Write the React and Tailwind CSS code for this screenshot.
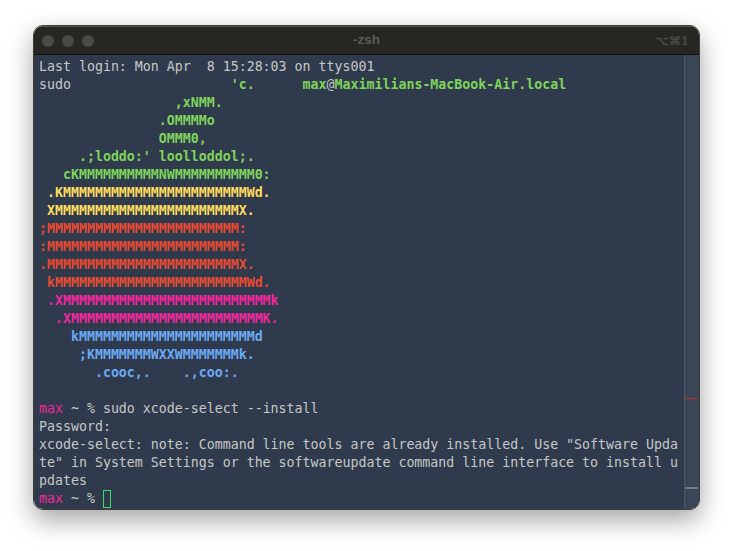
const G = "text-[#7fd45b] font-bold";
const Y = "text-[#ffdc5e] font-bold";
const R = "text-[#ea4a30] font-bold";
const P = "text-[#f5279f] font-bold";
const B = "text-[#6caaf5] font-bold";
const M = (n) => "M".repeat(n);

const logo = [
  [G, "                 ,xNMM."],
  [G, "               .OMMMMo"],
  [G, "               OMMM0,"],
  [G, "     .;loddo:' loolloddol;."],
  [G, "   cK" + M(10) + "NW" + M(10) + "0:"],
  [Y, " .K" + M(23) + "Wd."],
  [Y, " X" + M(23) + "X."],
  [R, ";" + M(24) + ":"],
  [R, ":" + M(24) + ":"],
  [R, "." + M(24) + "X."],
  [R, " k" + M(24) + "Wd."],
  [P, " .X" + M(26) + "k"],
  [P, "  .X" + M(24) + "K."],
  [B, "    k" + M(22) + "d"],
  [B, "     ;K" + M(7) + "WXXW" + M(7) + "k."],
  [B, "       .cooc,.    .,coo:."],
];

function Line({ children, className = "" }) {
  return <div className={"h-[18px] leading-[18px] whitespace-pre " + className}>{children}</div>;
}

export default function App() {
  return (
    <div className="w-[733px] h-[551px] bg-white pt-[25px] pl-[33px] overflow-hidden font-['DejaVu_Sans_Mono',monospace] text-[13.28px] text-[#c6c9c7]">
      <div className="w-[667px] h-[485px] rounded-[10px] overflow-hidden flex flex-col border border-[#3c3c3a] shadow-[0_10px_26px_rgba(0,0,0,0.36)]">
        <div className="relative h-[29px] shrink-0 bg-[#272622] border-t border-[#55544f] border-b border-b-[#111] flex items-center justify-between pl-[8px] pr-[11px]">
          <div className="flex gap-[8px]">
            <span className="w-[12px] h-[12px] rounded-full bg-[#4b4a46]" />
            <span className="w-[12px] h-[12px] rounded-full bg-[#4b4a46]" />
            <span className="w-[12px] h-[12px] rounded-full bg-[#4b4a46]" />
          </div>
          <span className="absolute inset-x-0 text-center font-['Liberation_Sans',sans-serif] font-bold text-[13.5px] text-[#5c5b55]">-zsh</span>
          <span className="font-['Liberation_Sans',sans-serif] font-bold text-[12px] text-[#4c4b46]">⌥⌘1</span>
        </div>
        <div className="flex-1 flex bg-[#2f3a4d] min-h-0">
          <div className="flex-1 pl-[5px] pt-[3px] overflow-hidden">
            <Line>Last login: Mon Apr  8 15:28:03 on ttys001</Line>
            <Line>sudo<span className={G}>{"                    'c.      max"}</span>@<span className={G}>Maximilians-MacBook-Air.local</span></Line>
            {logo.map(([c, t], i) => (
              <Line key={i} className={c}>{t}</Line>
            ))}
            <Line> </Line>
            <Line><span className="text-[#f5279f]">max</span> ~ % sudo xcode-select --install</Line>
            <Line>Password:</Line>
            <Line>xcode-select: note: Command line tools are already installed. Use "Software Upda</Line>
            <Line>te" in System Settings or the softwareupdate command line interface to install u</Line>
            <Line>pdates</Line>
            <Line className="flex">
              <span className="text-[#f5279f]">max</span><span> ~ % </span>
              <span className="inline-block w-[8px] h-[18px] border border-[#3fdc6a]" />
            </Line>
          </div>
          <div className="relative w-[15px] shrink-0 bg-[#3a4556] border-l border-[#4c5666]">
            <div className="absolute left-0 right-[1px] top-[343px] h-[1px] bg-[#b5322f]" />
            <div className="absolute left-0 right-[1px] top-[432px] h-[2px] bg-[#727a84]" />
          </div>
        </div>
      </div>
    </div>
  );
}
